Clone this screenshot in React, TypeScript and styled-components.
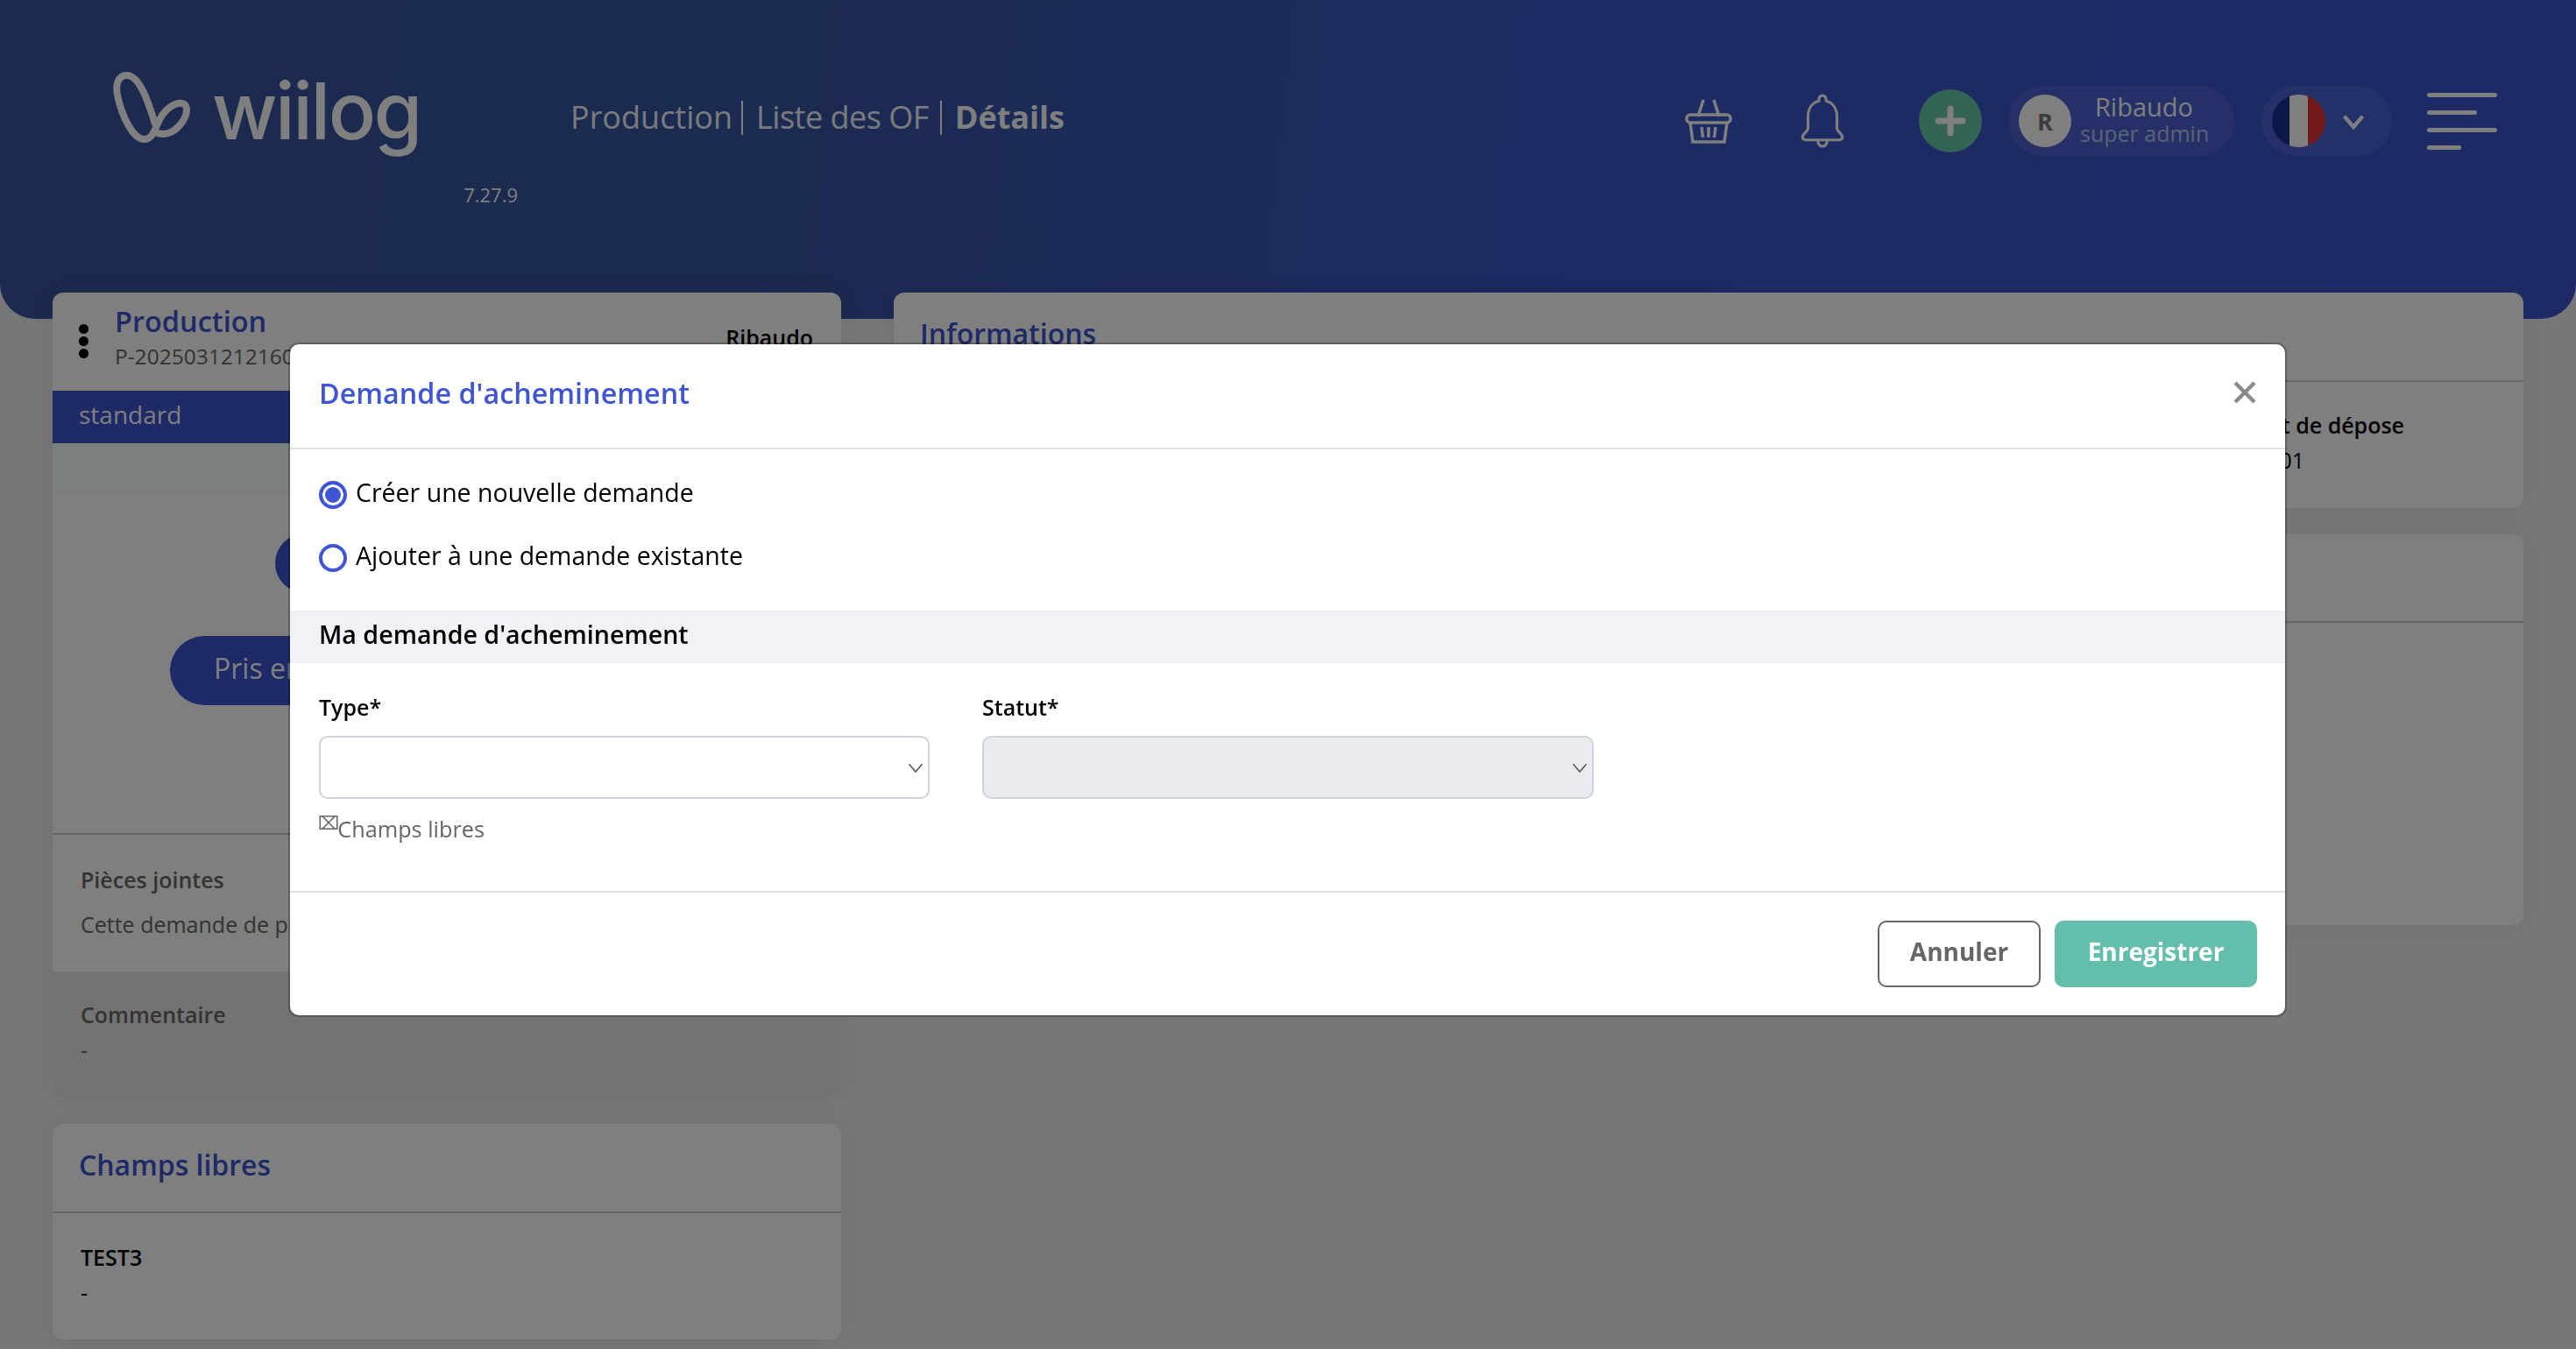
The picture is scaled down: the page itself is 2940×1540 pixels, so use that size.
import React from "react";
import styled, { createGlobalStyle } from "styled-components";

const GlobalStyle = createGlobalStyle`
  * {
    box-sizing: border-box;
  }
  html,
  body {
    margin: 0;
    height: 1540px;
    overflow: hidden;
    background: #eeeeee;
    font-family: "Open Sans", "Noto Sans", sans-serif;
  }
`;

const Page = styled.div`
  width: 2940px;
  height: 1540px;
  overflow: hidden;
`;

const Header = styled.header`
  height: 364px;
  padding: 81px 90px 0 126px;
  display: flex;
  align-items: flex-start;
  border-radius: 0 0 40px 40px;
  background: linear-gradient(96deg, #36549c 0%, #37549f 28%, #3a54c6 62%, #3a54ce 100%);
  color: #fff;
`;

const Brand = styled.div`
  width: 465px;
  display: flex;
  flex-direction: column;
`;

const LogoRow = styled.div`
  height: 102px;
  display: flex;
  align-items: flex-start;
  gap: 19px;
`;

const LogoMark = styled.svg`
  flex: none;
  margin-top: -2px;
`;

const LogoText = styled.span`
  font-family: "Inter", sans-serif;
  font-weight: 500;
  font-size: 90px;
  line-height: 92px;
  letter-spacing: -2.5px;
  margin-top: 0;
`;

const Version = styled.div`
  margin-top: 24px;
  text-align: right;
  font-size: 22px;
  line-height: 30px;
`;

const Crumbs = styled.nav`
  margin: 28px 0 0 60px;
  display: flex;
  align-items: center;
  font-size: 36px;
  line-height: 50px;
`;

const Crumb = styled.span<{ $current?: boolean; $tight?: boolean }>`
  font-weight: ${(props) => (props.$current ? 700 : 400)};
  letter-spacing: ${(props) => (props.$tight ? "-0.5px" : "0")};
  opacity: ${(props) => (props.$current ? 1 : 0.95)};
`;

const CrumbSep = styled.i<{ $left: number }>`
  width: 2px;
  height: 39px;
  margin: 0 15px 0 ${(props) => props.$left}px;
  background: #fff;
`;

const Tools = styled.div`
  margin-left: auto;
  margin-top: 17px;
  display: flex;
  align-items: center;
`;

const ToolIcon = styled.svg<{ $gap: number }>`
  display: block;
  margin-right: ${(props) => props.$gap}px;
  flex: none;
`;

const AddButton = styled.div`
  width: 72px;
  height: 72px;
  margin-right: 30px;
  border-radius: 50%;
  background: #66c8aa;
  display: flex;
  align-items: center;
  justify-content: center;
`;

const Pill = styled.div<{ $width: number; $gap: number }>`
  width: ${(props) => props.$width}px;
  height: 80px;
  margin-right: ${(props) => props.$gap}px;
  padding-left: 12px;
  border-radius: 40px;
  background: rgba(255, 255, 255, 0.08);
  display: flex;
  align-items: center;
`;

const Avatar = styled.div`
  width: 60px;
  height: 60px;
  flex: none;
  border-radius: 50%;
  background: #fff;
  color: #777;
  font-weight: 700;
  font-size: 27px;
  display: flex;
  align-items: center;
  justify-content: center;
`;

const UserText = styled.div`
  margin-left: 10px;
  width: 146px;
  text-align: center;
  white-space: nowrap;
`;

const UserName = styled.div`
  font-size: 29px;
  line-height: 32px;
  margin-top: -5px;
`;

const UserRole = styled.div`
  font-size: 25px;
  line-height: 28px;
  opacity: 0.62;
`;

const Flag = styled.div`
  width: 61px;
  height: 60px;
  flex: none;
  border-radius: 50%;
  overflow: hidden;
  display: flex;
`;

const FlagBand = styled.div<{ $color: string }>`
  flex: 1;
  background: ${(props) => props.$color};
`;

const PillChevron = styled.span`
  margin-left: 18px;
  display: flex;
`;

const Burger = styled.div`
  width: 80px;
  display: flex;
  flex-direction: column;
  gap: 15px;
`;

const BurgerLine = styled.div<{ $width: number }>`
  width: ${(props) => props.$width}px;
  height: 5px;
  border-radius: 3px;
  background: #fff;
`;

const Content = styled.main`
  margin: -30px 60px 0;
  display: grid;
  grid-template-columns: 900px 1860px;
  column-gap: 60px;
  align-items: start;
`;

const Column = styled.div`
  display: flex;
  flex-direction: column;
  gap: 30px;
`;

const Card = styled.section<{ $height: number }>`
  height: ${(props) => props.$height}px;
  background: #fff;
  border-radius: 12px;
  box-shadow: 0 0 30px rgba(0, 0, 0, 0.05);
  overflow: hidden;
`;

const ProductionHead = styled.div`
  height: 112px;
  padding: 0 32px 0 30px;
  display: flex;
  align-items: flex-start;
`;

const DotMenu = styled.div`
  width: 13px;
  margin: 36px 28px 0 0;
  display: flex;
  flex-direction: column;
  gap: 3px;
`;

const Dot = styled.div`
  width: 11px;
  height: 11px;
  border-radius: 50%;
  background: #000;
`;

const ProductionTitle = styled.div`
  color: #3a54ce;
  font-size: 32.500px;
  font-weight: 600;
  line-height: 44px;
  margin-top: 11px;
`;

const ProductionCode = styled.div`
  color: #666;
  font-size: 24.500px;
  line-height: 32px;
  margin-top: 2px;
`;

const Owner = styled.div`
  margin-left: auto;
  margin-top: 33px;
  font-size: 25px;
  font-weight: 600;
  line-height: 36px;
  color: #000;
`;

const TypeBand = styled.div`
  height: 60px;
  padding-left: 30px;
  background: #3a54ce;
  color: #fff;
  font-size: 28px;
  line-height: 54px;
`;

const StatusBand = styled.div`
  height: 58px;
  background: #f4fcf8;
`;

const ActionZone = styled.div`
  height: 389px;
  padding-top: 45px;
  display: flex;
  flex-direction: column;
  align-items: flex-start;
  border-bottom: 2px solid #ccc;
`;

const RoundAction = styled.div<{ $left: number; $top: number; $height: number }>`
  margin-left: ${(props) => props.$left}px;
  margin-top: ${(props) => props.$top}px;
  width: 480px;
  height: ${(props) => props.$height}px;
  padding-left: 50px;
  border-radius: 40px;
  background: #3a54ce;
  color: #fff;
  font-size: 32px;
  line-height: ${(props) => props.$height - 6}px;
  white-space: nowrap;
`;

const FieldBlock = styled.div<{ $shade?: boolean; $height: number; $top: number }>`
  height: ${(props) => props.$height}px;
  padding: ${(props) => props.$top}px 32px 0;
  background: ${(props) => (props.$shade ? "#e6e6e6" : "transparent")};
`;

const FieldLabel = styled.div<{ $dark?: boolean }>`
  font-size: 25px;
  font-weight: 600;
  line-height: 40px;
  white-space: nowrap;
  color: ${(props) => (props.$dark ? "#000" : "#666")};
`;

const FieldValue = styled.div<{ $dark?: boolean; $gap?: number }>`
  font-size: 25px;
  line-height: 40px;
  margin-top: ${(props) => props.$gap ?? 0}px;
  white-space: nowrap;
  color: ${(props) => (props.$dark ? "#000" : "#666")};
`;

const CardHead = styled.div<{ $height: number }>`
  height: ${(props) => props.$height}px;
  padding: 23px 30px 0;
  border-bottom: 2px solid #ccc;
  color: #3a54ce;
  font-size: 32px;
  font-weight: 600;
  line-height: 48px;
`;

const DepositBlock = styled.div`
  margin-left: 1428px;
  padding-top: 29px;
`;

const Overlay = styled.div`
  position: fixed;
  inset: 0;
  padding-top: 393px;
  background: rgba(0, 0, 0, 0.5);
`;

const Modal = styled.div`
  width: 2277px;
  height: 766px;
  margin-left: 331px;
  background: #fff;
  border-radius: 10px;
  box-shadow: 0 0 0 2px rgba(0, 0, 0, 0.25);
  display: flex;
  flex-direction: column;
`;

const ModalHead = styled.div`
  height: 120px;
  padding: 0 33px 8px;
  flex: none;
  display: flex;
  align-items: center;
  justify-content: space-between;
  border-bottom: 2px solid #dee2e6;
`;

const ModalTitle = styled.h2`
  margin: 0;
  color: #3f55d4;
  font-size: 32.300px;
  font-weight: 600;
`;

const RadioList = styled.div`
  height: 184px;
  padding: 29px 33px 0;
  display: flex;
  flex-direction: column;
  gap: 32px;
`;

const RadioRow = styled.label`
  height: 40px;
  display: flex;
  align-items: center;
  gap: 10px;
  font-size: 28.500px;
  color: #000;
`;

const RadioMark = styled.span<{ $checked?: boolean }>`
  width: 32px;
  height: 32px;
  margin-top: 6px;
  flex: none;
  border: 4px solid #3f55d4;
  border-radius: 50%;
  background: ${(props) => (props.$checked ? "#3f55d4" : "#fff")};
  box-shadow: ${(props) => (props.$checked ? "inset 0 0 0 3px #fff" : "none")};
`;

const SectionBand = styled.div`
  height: 60px;
  padding: 0 33px;
  flex: none;
  background: #f1f2f6;
  color: #000;
  font-size: 28.600px;
  font-weight: 600;
  line-height: 54px;
`;

const FormBody = styled.div`
  flex: 1;
  padding: 30px 33px 0;
`;

const SelectGrid = styled.div`
  display: grid;
  grid-template-columns: 697px 698px;
  column-gap: 60px;
`;

const SelectLabel = styled.div`
  font-size: 25px;
  font-weight: 600;
  line-height: 40px;
  color: #000;
`;

const SelectBox = styled.div<{ $disabled?: boolean }>`
  height: 72px;
  margin-top: 13px;
  padding-right: 4px;
  border: 2px solid #ced4da;
  border-radius: 10px;
  background: ${(props) => (props.$disabled ? "#e9ebef" : "#fff")};
  display: flex;
  align-items: center;
  justify-content: flex-end;
`;

const FreeFields = styled.div`
  margin-top: 16px;
  display: flex;
  align-items: flex-start;
  font-size: 25.300px;
  line-height: 36px;
  color: #666;
`;

const FreeFieldsMark = styled.span`
  font-family: "DejaVu Sans", sans-serif;
  font-size: 21px;
  line-height: 24px;
  margin: 0 -2px 0 -1px;
`;

const ModalFoot = styled.div`
  height: 142px;
  padding: 32px 32px 0;
  flex: none;
  display: flex;
  justify-content: flex-end;
  gap: 16px;
  border-top: 2px solid #dee2e6;
`;

const FootButton = styled.button<{ $primary?: boolean }>`
  width: ${(props) => (props.$primary ? 231 : 186)}px;
  height: 76px;
  padding: 0 0 6px;
  border: 2px solid ${(props) => (props.$primary ? "#63bfab" : "#666")};
  border-radius: 10px;
  background: ${(props) => (props.$primary ? "#63bfab" : "#fff")};
  color: ${(props) => (props.$primary ? "#fff" : "#666")};
  font-family: inherit;
  font-size: 28px;
  font-weight: 700;
`;

const CloseIcon = styled.svg`
  display: block;
`;

const Chevron = ({ color, width = 16, stroke = 2 }: { color: string; width?: number; stroke?: number }) => (
  <svg width={width} height={width} viewBox="0 0 16 16" fill="none">
    <path d="M2 5l6 7 6-7" stroke={color} strokeWidth={stroke} />
  </svg>
);

const Logo = () => (
  <LogoMark width="97" height="88" viewBox="80 55 291 265" fill="none">
    <path
      d="M232 240C210 170 180 75 135 76C105 76 95 110 105 150C118 210 155 298 198 296C225 295 232 260 250 225C270 190 300 170 325 172C350 175 345 215 320 245C295 275 262 285 235 272"
      stroke="#fff"
      strokeWidth="24"
      strokeLinecap="round"
    />
  </LogoMark>
);

const App: React.FC = () => {
  return (
    <Page>
      <GlobalStyle />
      <Header>
        <Brand>
          <LogoRow>
            <Logo />
            <LogoText>wiilog</LogoText>
          </LogoRow>
          <Version>7.27.9</Version>
        </Brand>
        <Crumbs>
          <Crumb>Production</Crumb>
          <CrumbSep $left={10} />
          <Crumb $tight>Liste des OF</Crumb>
          <CrumbSep $left={13} />
          <Crumb $current>Détails</Crumb>
        </Crumbs>
        <Tools>
          <ToolIcon $gap={75} width="54" height="52" viewBox="0 0 54 52" fill="none" stroke="#fff" strokeWidth="3.500">
            <path d="M15 21L21 2M39 21L33 2" />
            <rect x="2" y="19" width="50" height="9" rx="4" />
            <path d="M6 28l3 22h36l3-22M19 33l1.500 12M27 33v12M35 33l-1.500 12" />
          </ToolIcon>
          <ToolIcon $gap={82} width="56" height="62" viewBox="0 0 52 60" fill="none" stroke="#fff" strokeWidth="3">
            <path d="M26 2c-3 0-4 3-4 6-8 2-12 9-12 18v12c0 4-6 6-6 10 0 2 1 3 4 3h36c3 0 4-1 4-3 0-4-6-6-6-10V26c0-9-4-16-12-18 0-3-1-6-4-6z" />
            <path d="M21 51c0 5 2 7 5 7s5-2 5-7" />
          </ToolIcon>
          <AddButton>
            <svg width="36" height="36" viewBox="0 0 36 36" stroke="#fff" strokeWidth="7" strokeLinecap="round">
              <path d="M18 4v28M4 18h28" />
            </svg>
          </AddButton>
          <Pill $width={258} $gap={31}>
            <Avatar>R</Avatar>
            <UserText>
              <UserName>Ribaudo</UserName>
              <UserRole>super admin</UserRole>
            </UserText>
          </Pill>
          <Pill $width={149} $gap={40}>
            <Flag>
              <FlagBand $color="#142e90" />
              <FlagBand $color="#fff" />
              <FlagBand $color="#e63333" />
            </Flag>
            <PillChevron>
              <Chevron color="#fff" width={28} stroke={2.500} />
            </PillChevron>
          </Pill>
          <Burger>
            <BurgerLine $width={80} />
            <BurgerLine $width={57} />
            <BurgerLine $width={80} />
            <BurgerLine $width={39} />
          </Burger>
        </Tools>
      </Header>
      <Content>
        <Column>
          <Card $height={919}>
            <ProductionHead>
              <DotMenu>
                <Dot />
                <Dot />
                <Dot />
              </DotMenu>
              <div>
                <ProductionTitle>Production</ProductionTitle>
                <ProductionCode>P-20250312121600-01</ProductionCode>
              </div>
              <Owner>Ribaudo</Owner>
            </ProductionHead>
            <TypeBand>standard</TypeBand>
            <StatusBand />
            <ActionZone>
              <RoundAction $left={254} $top={0} $height={68}>
                Terminer
              </RoundAction>
              <RoundAction $left={134} $top={49} $height={79}>
                Pris en charge
              </RoundAction>
            </ActionZone>
            <FieldBlock $height={156} $top={31}>
              <FieldLabel>Pièces jointes</FieldLabel>
              <FieldValue $gap={11}>Cette demande de production ne contient aucune pièce jointe</FieldValue>
            </FieldBlock>
            <FieldBlock $shade $height={144} $top={29}>
              <FieldLabel>Commentaire</FieldLabel>
              <FieldValue>-</FieldValue>
            </FieldBlock>
          </Card>
          <Card $height={246}>
            <CardHead $height={102}>Champs libres</CardHead>
            <FieldBlock $height={144} $top={30}>
              <FieldLabel $dark>TEST3</FieldLabel>
              <FieldValue $dark>-</FieldValue>
            </FieldBlock>
          </Card>
        </Column>
        <Column>
          <Card $height={246}>
            <CardHead $height={102}>Informations</CardHead>
            <DepositBlock>
              <FieldLabel $dark>Emplacement de dépose</FieldLabel>
              <FieldValue $dark>EMP-DEPOSE01</FieldValue>
            </DepositBlock>
          </Card>
          <Card $height={446}>
            <CardHead $height={101}>Détails</CardHead>
          </Card>
        </Column>
      </Content>
      <Overlay>
        <Modal>
          <ModalHead>
            <ModalTitle>Demande d'acheminement</ModalTitle>
            <CloseIcon width="26" height="26" viewBox="0 0 26 26" stroke="#8a8a8a" strokeWidth="4.500">
              <path d="M2 2l22 22M24 2L2 24" />
            </CloseIcon>
          </ModalHead>
          <RadioList>
            <RadioRow>
              <RadioMark $checked />
              Créer une nouvelle demande
            </RadioRow>
            <RadioRow>
              <RadioMark />
              Ajouter à une demande existante
            </RadioRow>
          </RadioList>
          <SectionBand>Ma demande d'acheminement</SectionBand>
          <FormBody>
            <SelectGrid>
              <div>
                <SelectLabel>Type*</SelectLabel>
                <SelectBox>
                  <Chevron color="#555" width={20} stroke={1.200} />
                </SelectBox>
              </div>
              <div>
                <SelectLabel>Statut*</SelectLabel>
                <SelectBox $disabled>
                  <Chevron color="#555" width={20} stroke={1.200} />
                </SelectBox>
              </div>
            </SelectGrid>
            <FreeFields>
              <FreeFieldsMark>⌧</FreeFieldsMark>
              Champs libres
            </FreeFields>
          </FormBody>
          <ModalFoot>
            <FootButton>Annuler</FootButton>
            <FootButton $primary>Enregistrer</FootButton>
          </ModalFoot>
        </Modal>
      </Overlay>
    </Page>
  );
};

export default App;
